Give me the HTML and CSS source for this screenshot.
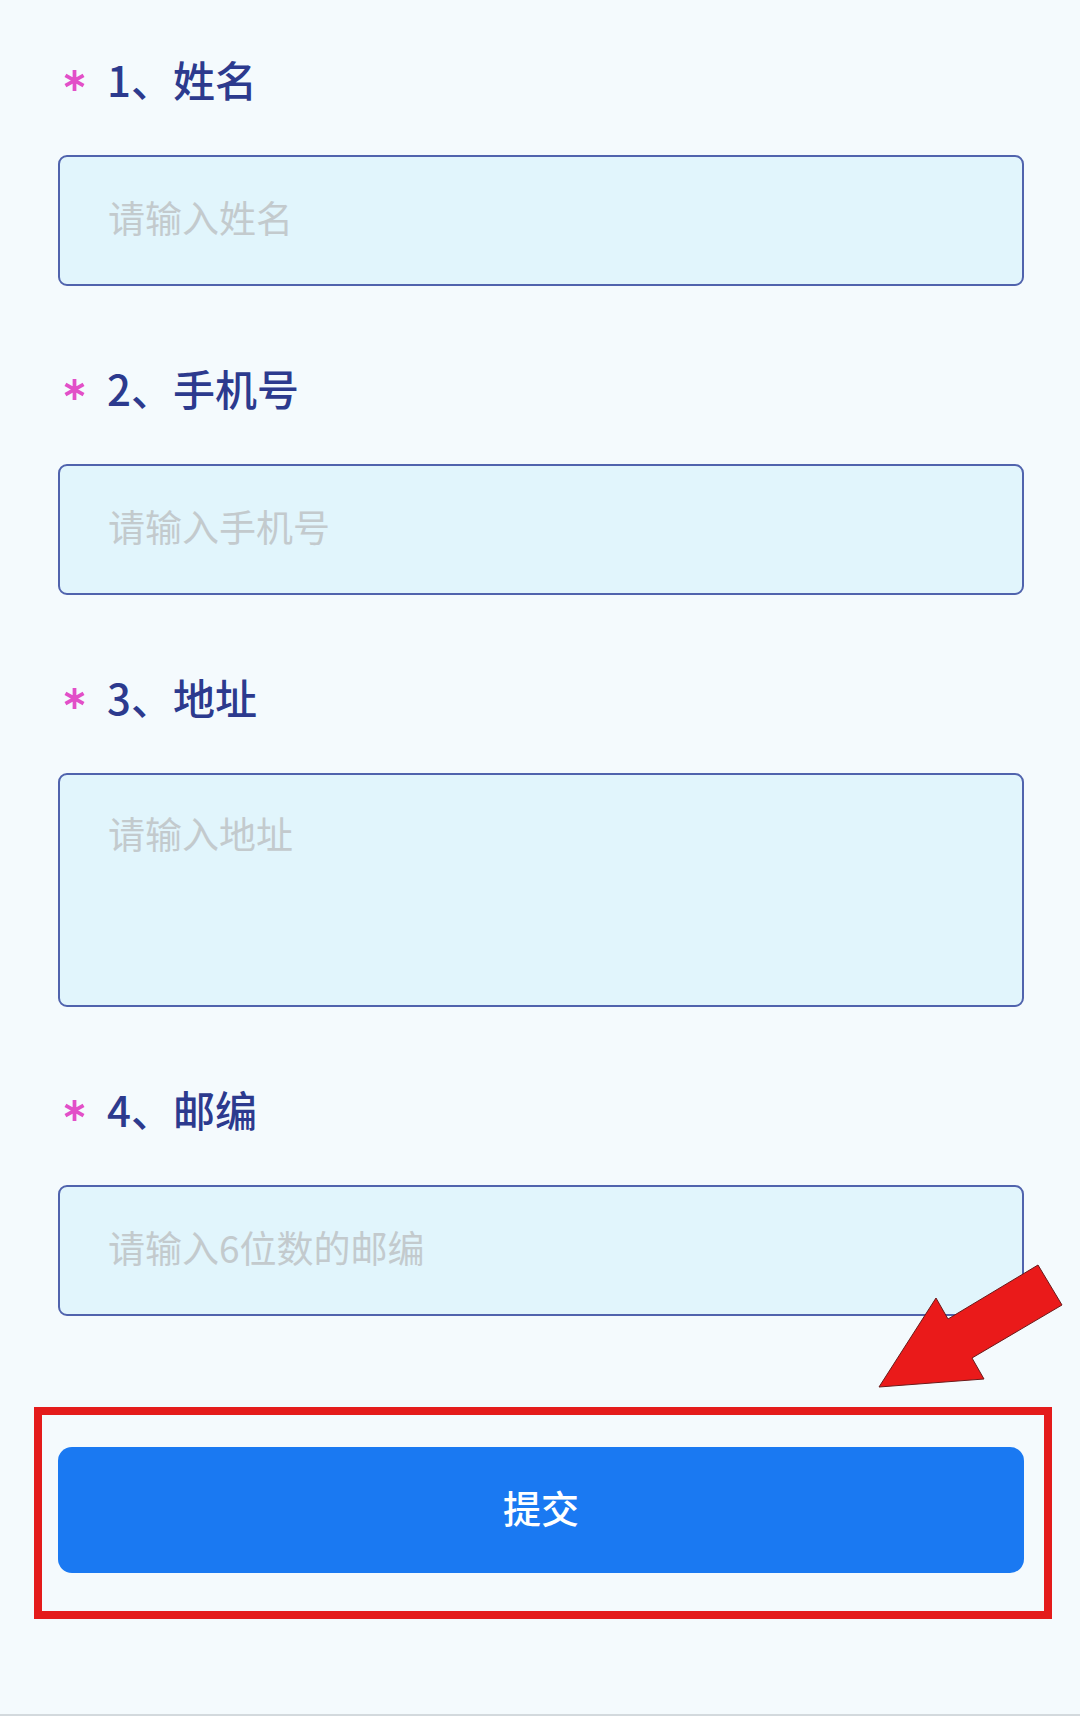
FILE: index.html
```
<!DOCTYPE html>
<html lang="zh-CN">

<head>
  <meta charset="UTF-8">
  <meta name="viewport" content="width=device-width, initial-scale=1.0">
  <link rel="stylesheet" href="styles.css">
  <title>填写信息</title>
</head>

<body>
  <div id="page">
    <form id="info-form">
      <div class="field">
        <div class="label">
          <svg class="star" viewBox="0 0 24 24"><path d="M12 2v20M3.3 7l17.4 10M3.3 17l17.4-10" /></svg>
          <span>1、姓名</span>
        </div>
        <input class="box" type="text" placeholder="请输入姓名">
      </div>

      <div class="field">
        <div class="label">
          <svg class="star" viewBox="0 0 24 24"><path d="M12 2v20M3.3 7l17.4 10M3.3 17l17.4-10" /></svg>
          <span>2、手机号</span>
        </div>
        <input class="box" type="text" placeholder="请输入手机号">
      </div>

      <div class="field">
        <div class="label">
          <svg class="star" viewBox="0 0 24 24"><path d="M12 2v20M3.3 7l17.4 10M3.3 17l17.4-10" /></svg>
          <span>3、地址</span>
        </div>
        <textarea class="box area" placeholder="请输入地址"></textarea>
      </div>

      <div class="field">
        <div class="label">
          <svg class="star" viewBox="0 0 24 24"><path d="M12 2v20M3.3 7l17.4 10M3.3 17l17.4-10" /></svg>
          <span>4、邮编</span>
        </div>
        <input class="box" type="text" placeholder="请输入6位数的邮编">
      </div>
    </form>

    <div id="submit-frame">
      <button type="button" id="submit-btn">提交</button>
    </div>

    <!-- fleche rouge -->
    <svg id="arrow" viewBox="0 0 1080 1716">
      <polygon points="879,1387 936,1298 948,1319 1038,1265 1062,1305 972,1358 984,1379" />
    </svg>
  </div>
</body>

</html>
```

FILE: styles.css
```
body {
  margin: 0;
  background-color: #f4fafd;
  font-family: "Noto Sans CJK SC", "Noto Sans", sans-serif;
}

#page {
  position: relative;
  height: 1714px;
  border-bottom: 2px solid #d3d9dd;
}

#info-form {
  width: 966px;
  margin-left: 58px;
  padding-top: 50px;
}

.field {
  margin-bottom: 73px;
}

.field:last-child {
  margin-bottom: 0;
}

.label {
  display: flex;
  align-items: center;
  height: 56px;
  margin-bottom: 49px;
  font-size: 42px;
  font-weight: 500;
  color: #2c3a8e;
}

.star {
  width: 25px;
  height: 25px;
  margin: 4px 20px 0 4px;
  stroke: #e24fc8;
  stroke-width: 3.6;
  fill: none;
}

.box {
  display: block;
  box-sizing: border-box;
  width: 966px;
  height: 131px;
  padding: 0 0 7px 48px;
  border: 2px solid #5063ad;
  border-radius: 9px;
  background-color: #e1f5fc;
  font-family: "Noto Sans CJK SC", "Noto Sans", sans-serif;
  font-size: 37px;
  color: #333;
  outline: none;
}

.box::placeholder {
  color: #c3cacd;
}

.area {
  height: 234px;
  padding-top: 32px;
  line-height: 52px;
  resize: none;
}

#submit-frame {
  box-sizing: border-box;
  width: 1018px;
  height: 212px;
  margin: 91px 0 0 34px;
  padding: 32px 0 0 16px;
  border: 8px solid #e41b1b;
}

#submit-btn {
  display: block;
  width: 966px;
  height: 126px;
  padding-bottom: 8px;
  border: none;
  border-radius: 14px;
  background-color: #1a79f2;
  color: white;
  font-family: "Noto Sans CJK SC", "Noto Sans", sans-serif;
  font-size: 38px;
  font-weight: 500;
  cursor: pointer;
}

#arrow {
  position: absolute;
  top: 0;
  left: 0;
  width: 1080px;
  height: 1716px;
  pointer-events: none;
}

#arrow polygon {
  fill: #ea1a1a;
  stroke: #6b1a1a;
  stroke-width: 1;
}
```
